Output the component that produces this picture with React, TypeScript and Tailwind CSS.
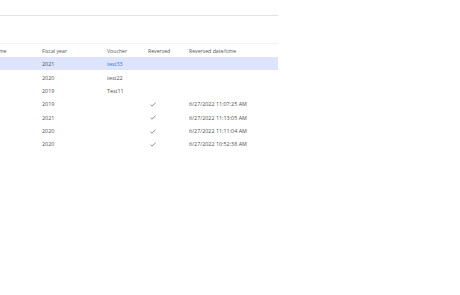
import React from "react";

const rows = [
  { year: "2021", voucher: "test33", reversed: false, date: "", selected: true },
  { year: "2020", voucher: "test22", reversed: false, date: "" },
  { year: "2019", voucher: "Test11", reversed: false, date: "" },
  { year: "2019", voucher: "", reversed: true, date: "6/27/2022 11:07:25 AM" },
  { year: "2021", voucher: "", reversed: true, date: "6/27/2022 11:13:05 AM" },
  { year: "2020", voucher: "", reversed: true, date: "6/27/2022 11:11:04 AM" },
  { year: "2020", voucher: "", reversed: true, date: "6/27/2022 10:52:38 AM" },
];

const Check = () => (
  <svg width="6" height="5" viewBox="0 0 6 5" className="ml-[2px]">
    <polyline points="0.5,2.8 2,4.2 5.5,0.8" fill="none" stroke="#6f6f6f" strokeWidth="0.8" />
  </svg>
);

export default function App() {
  return (
    <div
      className="w-[460px] h-[295px] bg-white overflow-hidden"
      style={{ fontFamily: '"Open Sans", "Noto Sans", sans-serif' }}
    >
      <div className="w-[278px]">
        <div className="h-[16px] border-b border-[#e3e3e3]" />
        <div className="h-[28px] border-b border-[#f2f2f2]" />
        {/* header */}
        <div className="flex h-[13px] items-center pt-[2px] text-[5.2px] text-[#555]">
          <div className="w-[50px] -ml-[8px]">Name</div>
          <div className="w-[65px]">Fiscal year</div>
          <div className="w-[41px]">Voucher</div>
          <div className="w-[41px]">Reversed</div>
          <div>Reversed date/time</div>
        </div>
        {rows.map((r, i) => (
          <div
            key={i}
            className={
              "flex h-[13.4px] items-center pt-[1px] text-[5.4px] " +
              (r.selected ? "bg-[#dce5fb] text-[#3b6fd6]" : "text-[#4f4f4f]")
            }
          >
            <div className="w-[50px] -ml-[8px]" />
            <div className={"w-[65px] " + (r.selected ? "text-[#4f4f4f]" : "")}>{r.year}</div>
            <div className="w-[41px]">{r.voucher}</div>
            <div className="w-[41px] flex items-center">{r.reversed ? <Check /> : null}</div>
            <div>{r.date}</div>
          </div>
        ))}
      </div>
    </div>
  );
}
